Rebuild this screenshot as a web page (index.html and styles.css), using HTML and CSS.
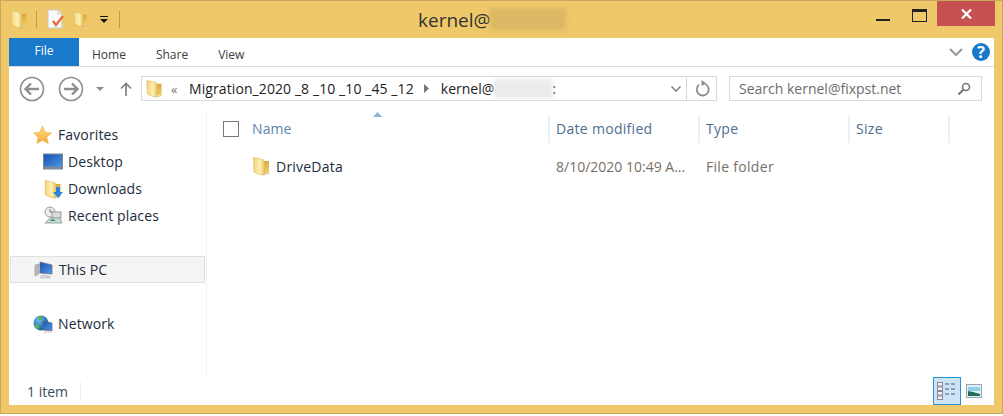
FILE: index.html
```html
<!DOCTYPE html>
<html lang="en">
<head>
<meta charset="utf-8">
<title>kernel@</title>
<link rel="stylesheet" href="styles.css">
</head>
<body>
<svg class="defs" width="0" height="0" aria-hidden="true">
  <defs>
    <linearGradient id="fold" x1="0" y1="0" x2="1" y2="0">
      <stop offset="0" stop-color="#f3d47a"/><stop offset=".6" stop-color="#fdf0b4"/><stop offset="1" stop-color="#e6c25e"/>
    </linearGradient>
    <linearGradient id="fold2" x1="0" y1="0" x2="0" y2="1">
      <stop offset="0" stop-color="#d9a93d"/><stop offset="1" stop-color="#f0cf6c"/>
    </linearGradient>
    <linearGradient id="scr" x1="0" y1="0" x2="1" y2="1">
      <stop offset="0" stop-color="#1a4fb0"/><stop offset="1" stop-color="#4f9ae8"/>
    </linearGradient>
    <linearGradient id="star" x1="0" y1="0" x2="0" y2="1">
      <stop offset="0" stop-color="#ffdf7a"/><stop offset="1" stop-color="#f3a93c"/>
    </linearGradient>
    <radialGradient id="globe" cx=".35" cy=".3" r=".8">
      <stop offset="0" stop-color="#6fc0ea"/><stop offset=".6" stop-color="#2a78b8"/><stop offset="1" stop-color="#1d4f7c"/>
    </radialGradient>
    <symbol id="folder" viewBox="0 0 18 20">
      <path d="M12 5h4.500v12.500H10z" fill="url(#fold2)"/>
      <path d="M1 1.500 10 3.500 12 5v14l-5-.5L1.500 16z" fill="url(#fold)" stroke="#dcb552" stroke-width=".6"/>
      <path d="M11 19l6-1.500" stroke="#bbb" stroke-width="1" opacity=".6"/>
    </symbol>
    <symbol id="pc" viewBox="0 0 20 20">
      <path d="M1 5l4-1v10l-4 2z" fill="#b8b8b8" stroke="#8a8a8a" stroke-width=".5"/>
      <path d="M6 2l12 3v9L6 13z" fill="url(#scr)" stroke="#667" stroke-width=".7"/>
      <path d="M8 15l8 1v2H6z" fill="#d8d8d8" stroke="#aaa" stroke-width=".5"/>
    </symbol>
  </defs>
</svg>
<div class="window">
  <header class="titlebar">
    <div class="qat">
      <svg class="ico-16" viewBox="0 0 18 20"><use href="#folder"/></svg>
      <span class="qat-sep"></span>
      <svg class="qat-doc" viewBox="0 0 18 20">
        <path d="M1 1h10l4 4v14H1z" fill="#fafafa" stroke="#c9c9c9"/>
        <path d="M11 1v4h4" fill="#eee" stroke="#c9c9c9"/>
        <path d="M6 12l3 4 7-9" fill="none" stroke="#e8703d" stroke-width="2.400"/>
      </svg>
      <svg class="qat-folder" viewBox="0 0 18 20"><use href="#folder"/></svg>
      <svg class="qat-menu" viewBox="0 0 8 7"><path d="M0 0h8v1H0z" fill="#111"/><path d="M0 3h8L4 7z" fill="#111"/></svg>
      <span class="qat-sep qat-sep-end"></span>
    </div>
    <div class="title"><span>kernel@</span><span class="blur blur-title"></span></div>
    <div class="controls">
      <button class="ctl" aria-label="Minimize"><span class="min"></span></button>
      <button class="ctl" aria-label="Maximize"><span class="max"></span></button>
      <button class="ctl close" aria-label="Close">
        <svg width="11" height="10" viewBox="0 0 11 10"><path d="M1 .5l9 9M10 .5l-9 9" stroke="#fff" stroke-width="2.200"/></svg>
      </button>
    </div>
  </header>

  <div class="content">
    <nav class="ribbon">
      <span class="tab-file">File</span>
      <span class="tab tab-home">Home</span>
      <span class="tab tab-share">Share</span>
      <span class="tab tab-view">View</span>
      <span class="ribbon-right">
        <svg width="14" height="9" viewBox="0 0 14 9"><path d="M1 1l6 6 6-6" fill="none" stroke="#9a9a9a" stroke-width="2"/></svg>
        <span class="help">?</span>
      </span>
    </nav>

    <div class="toolbar">
      <svg class="nav-btn" viewBox="0 0 26 26"><circle cx="13" cy="13" r="11.500" fill="none" stroke="#8e8e8e" stroke-width="1.600"/><path d="M20 13H7M12 7.500 6.500 13l5.500 5.500" fill="none" stroke="#8e8e8e" stroke-width="2.400"/></svg>
      <svg class="nav-btn nav-fwd" viewBox="0 0 26 26"><circle cx="13" cy="13" r="11.500" fill="none" stroke="#8e8e8e" stroke-width="1.600"/><path d="M6 13h13M14 7.500l5.500 5.500-5.500 5.500" fill="none" stroke="#8e8e8e" stroke-width="2.400"/></svg>
      <svg class="nav-drop" width="8" height="4" viewBox="0 0 8 4"><path d="M0 0h8L4 4z" fill="#8e8e8e"/></svg>
      <svg class="nav-up" width="12" height="14" viewBox="0 0 12 14"><path d="M6 14V1.500M1 6.500l5-5 5 5" fill="none" stroke="#808080" stroke-width="1.700"/></svg>
      <div class="address">
        <svg class="addr-folder" viewBox="0 0 18 20"><use href="#folder"/></svg>
        <span class="chev">«</span>
        <span class="crumb crumb-long">Migration_2020 _8 _10 _10 _45 _12</span>
        <svg class="crumb-arrow" width="5" height="9" viewBox="0 0 5 9"><path d="M0 0l5 4.500L0 9z" fill="#777"/></svg>
        <span class="crumb">kernel@</span><span class="blur blur-addr"></span><span class="crumb crumb-end">:</span>
        <svg class="addr-drop" width="10" height="6" viewBox="0 0 10 6"><path d="M.5.500 5 5 9.500.500" fill="none" stroke="#777" stroke-width="1.400"/></svg>
        <span class="refresh">
          <svg width="16" height="17" viewBox="0 0 16 17"><path d="M10.500 4.200A6 6 0 1 1 4 4.800" fill="none" stroke="#8e8e8e" stroke-width="1.800"/><path d="M6.500 0v6l5-2.500z" fill="#8e8e8e"/></svg>
        </span>
      </div>
      <div class="search">
        <span>Search kernel@fixpst.net</span>
        <svg width="14" height="14" viewBox="0 0 14 14"><circle cx="9" cy="5" r="3.500" fill="none" stroke="#777" stroke-width="1.600"/><path d="M6.500 7.500 1.500 12.500" stroke="#777" stroke-width="2.200"/></svg>
      </div>
    </div>

    <div class="body">
      <aside class="sidebar">
        <div class="side-group">
          <div class="side-row head">
            <svg class="side-ico" viewBox="0 0 20 20"><path d="M9.500 1l2.700 6.200 6.300.7-4.700 4.300 1.500 6.300-5.800-3.200-5.600 3.200 1.300-6.300L.5 7.900 6.800 7.200z" fill="url(#star)" stroke="#e8b04a" stroke-width=".6"/></svg>
            <span>Favorites</span>
          </div>
          <div class="side-row sub">
            <svg class="side-ico" viewBox="0 0 20 18"><rect x=".5" y="1" width="19" height="15" fill="url(#scr)" stroke="#7d8a99"/><rect x=".5" y="13.500" width="19" height="2.500" fill="#7d8a99"/></svg>
            <span>Desktop</span>
          </div>
          <div class="side-row sub">
            <svg class="side-ico" viewBox="0 0 20 20"><use href="#folder"/><path d="M13 8h4v5h3l-5 6-5-6h3z" fill="#2a84d8"/></svg>
            <span>Downloads</span>
          </div>
          <div class="side-row sub">
            <svg class="side-ico" viewBox="0 0 20 20"><circle cx="7" cy="6" r="5" fill="#eee" stroke="#999"/><path d="M7 3v3h3" fill="none" stroke="#777"/><rect x="9" y="6" width="9" height="6" fill="#dcdcdc" stroke="#999"/><path d="M2 17l5-5h10l2 5z" fill="#cfd8dc" stroke="#8a9"/><path d="M6 15l4-2 3 2z" fill="#3a8f6a"/></svg>
            <span>Recent places</span>
          </div>
        </div>
        <div class="side-row head selected">
          <svg class="side-ico" viewBox="0 0 20 20"><use href="#pc"/></svg>
          <span>This PC</span>
        </div>
        <div class="side-row head network">
          <svg class="side-ico" viewBox="0 0 20 20"><circle cx="8" cy="9" r="7.500" fill="url(#globe)"/><path d="M1.500 11c2-2 4-1 5 1l-1 4C3.500 15 2 13 1.500 11zM5 3c2-1 4-1 5 0L8 6 5 5.500z" fill="#58b25a"/><path d="M10 7l9 2v8l-9-1z" fill="url(#scr)" stroke="#667" stroke-width=".7"/><path d="M11 17l7 .8V19h-8z" fill="#ddd"/></svg>
          <span>Network</span>
        </div>
      </aside>

      <main class="list">
        <div class="list-head">
          <span class="check"></span>
          <div class="col col-name">Name<svg class="sort" width="9" height="5" viewBox="0 0 9 5"><path d="M0 5l4.500-5L9 5z" fill="#8ab4d2"/></svg></div>
          <div class="col col-date">Date modified</div>
          <div class="col col-type">Type</div>
          <div class="col col-size">Size</div>
        </div>
        <div class="list-row">
          <div class="cell-name">
            <svg class="row-ico" viewBox="0 0 18 20"><use href="#folder"/></svg>
            <span>DriveData</span>
          </div>
          <div class="cell cell-date">8/10/2020 10:49 A...</div>
          <div class="cell cell-type">File folder</div>
        </div>
      </main>
    </div>

    <footer class="status">
      <span class="count">1 item</span>
      <span class="views">
        <span class="view-btn active">
          <svg width="20" height="20" viewBox="0 0 20 20">
            <g fill="#f4f4f4" stroke="#889"><rect x=".5" y="1.500" width="5" height="3.500"/><rect x=".5" y="6" width="5" height="3.500"/><rect x=".5" y="10.500" width="5" height="3.500"/><rect x=".5" y="15" width="5" height="3.500"/></g>
            <path d="M8 3h4M14 3h4M8 8h4M14 8h4M8 13h4M14 13h4" stroke="#4a5a68" stroke-width="1.200"/>
          </svg>
        </span>
        <span class="view-btn">
          <svg width="16" height="14" viewBox="0 0 16 14"><rect x=".5" y=".5" width="15" height="13" fill="#dff0f4" stroke="#9aa7b2"/><path d="M2 3h12v4H2z" fill="#8ed2e4"/><path d="M2 7l5 1 7 2v2H2z" fill="#1f6d55"/></svg>
        </span>
      </span>
    </footer>
  </div>
</div>
</body>
</html>
```

FILE: styles.css
```css
* { box-sizing: border-box; }
html, body { margin: 0; padding: 0; background: #fff; }
body { width: 1003px; height: 416px; overflow: hidden; font-family: "Open Sans", "Noto Sans", "Liberation Sans", sans-serif; font-size: 14px; color: #1a1a1a; }
.defs { display: block; height: 0; }

.window { height: 414px; background: #efc869; border: 1px solid #c8a85a; padding: 0 8px 8px; display: flex; flex-direction: column; }

.titlebar { height: 37px; flex: none; display: flex; align-items: flex-start; }
.qat { width: 376px; padding-top: 8px; display: flex; align-items: center; height: 28px; }
.ico-16 { width: 18px; height: 20px; flex: none; margin-left: 1px; }
.qat-sep { width: 1px; height: 17px; background: #b99a4e; margin-left: 8px; flex: none; }
.qat-doc { width: 18px; height: 20px; margin-left: 10px; flex: none; }
.qat-folder { width: 15px; height: 20px; margin-left: 8px; flex: none; }
.qat-menu { width: 8px; height: 7px; margin-left: 12px; flex: none; }
.qat-sep-end { margin-left: 11px; }

.title { width: 292px; padding-top: 8px; padding-left: 33px; font-size: 19px; line-height: 22px; color: #333; display: flex; }
.blur { display: inline-block; filter: blur(2px); }
.blur-title { width: 76px; height: 22px; background: #dbb863; margin-top: -1px; margin-left: -1px; }

.controls { flex: 1; display: flex; justify-content: flex-end; align-items: flex-start; margin-right: -1px; }
.ctl { border: 0; padding: 0; background: none; height: 25px; display: flex; align-items: center; justify-content: center; }
.ctl:nth-child(1) { width: 32px; margin-right: 4px; }
.ctl:nth-child(2) { width: 33px; }
.min { width: 14px; height: 2px; background: #222; margin-top: 12px; }
.max { width: 15px; height: 13px; border: 1px solid #222; border-top-width: 3px; margin-top: 3px; }
.close { width: 58px; margin-left: 1px; background: #c75050; }

.content { flex: 1; background: #fff; display: flex; flex-direction: column; min-height: 0; }

.ribbon { height: 29px; flex: none; border-bottom: 1px solid #dadbdc; display: flex; font-size: 12px; color: #3c3c3c; }
.tab-file { width: 70px; height: 28px; background: #1979ca; color: #fff; text-align: center; line-height: 25px; }
.tab { line-height: 33px; }
.tab-home { margin-left: 13px; }
.tab-share { margin-left: 30px; }
.tab-view { margin-left: 30px; }
.ribbon-right { margin-left: auto; display: flex; align-items: center; gap: 9px; padding-right: 4px; }
.help { width: 18px; height: 18px; border-radius: 50%; background: #1979ca; color: #fff; font-size: 16px; font-weight: 700; text-align: center; line-height: 18px; }

.toolbar { height: 45px; flex: none; display: flex; align-items: center; padding-left: 10px; padding-bottom: 2px; }
.nav-btn { width: 26px; height: 26px; flex: none; }
.nav-fwd { margin-left: 13px; }
.nav-drop { margin-left: 12px; flex: none; }
.nav-up { margin-left: 16px; flex: none; }
.address { width: 576px; height: 25px; margin-left: 9px; border: 1px solid #d9d9d9; display: flex; align-items: center; padding-left: 4px; flex: none; color: #222; }
.addr-folder { width: 17px; height: 19px; flex: none; }
.chev { margin-left: 8px; width: 18px; color: #777; font-size: 13px; }
.crumb { white-space: pre; }
.crumb-long { letter-spacing: 0.090px; }
.crumb-arrow { margin: 0 12px 0 10px; flex: none; }
.crumb-end { margin-left: -1px; }
.blur-addr { width: 59px; height: 20px; background: #ececec; }
.addr-drop { margin-left: auto; margin-right: 5px; flex: none; }
.refresh { width: 30px; height: 23px; border-left: 1px solid #d9d9d9; display: flex; align-items: center; justify-content: center; padding-left: 2px; flex: none; }
.search { width: 253px; height: 25px; margin-left: 12px; border: 1px solid #d9d9d9; display: flex; align-items: center; justify-content: space-between; padding: 0 10px 0 9px; color: #6d6d6d; flex: none; }

.body { flex: 1; display: flex; min-height: 0; }
.sidebar { width: 198px; flex: none; border-right: 1px solid #f0f0f0; padding-top: 9px; color: #1c2c3c; letter-spacing: 0.120px; }
.side-row { height: 27px; display: flex; align-items: center; }
.side-ico { width: 20px; height: 20px; flex: none; margin-right: 5px; }
.head { padding-left: 25px; }
.head .side-ico { width: 20px; margin-right: 5px; margin-left: -1px; }
.sub { padding-left: 34px; }
.selected { margin-top: 27px; margin-left: 1px; width: 195px; height: 27px; padding-left: 24px; background: #f4f4f4; border: 1px solid #e0e0e0; }
.network { margin-top: 27px; }

.list { flex: 1; }
.list-head { height: 34px; display: flex; align-items: center; }
.check { width: 16px; height: 16px; border: 1px solid #777; margin-left: 16px; flex: none; }
.col { height: 28px; line-height: 28px; padding-left: 6px; border-right: 2px solid #e9f1f9; color: #4d6d92; flex: none; letter-spacing: 0.300px; }
.col-name { width: 305px; margin-left: 6px; padding-left: 7px; position: relative; color: #5b85b0; letter-spacing: 0.100px; }
.col-date, .col-type { width: 150px; }
.col-size { width: 100px; }
.sort { position: absolute; left: 128px; top: -3px; }

.list-row { height: 40px; display: flex; align-items: center; }
.cell-name { width: 349px; padding-left: 45px; display: flex; align-items: center; flex: none; color: #1c2c3c; letter-spacing: 0.220px; }
.row-ico { width: 19px; height: 20px; margin-right: 5px; flex: none; }
.cell { width: 150px; color: #7a6f66; flex: none; white-space: nowrap; }
.cell-type { letter-spacing: 0.300px; }

.status { height: 28px; flex: none; display: flex; align-items: center; justify-content: space-between; padding-left: 18px; color: #3c4c5c; }
.count { width: 54px; border-right: 1px solid #eee; }
.views { display: flex; align-items: flex-end; height: 28px; padding-right: 8px; }
.view-btn { height: 28px; width: 32px; display: flex; align-items: center; justify-content: center; }
.view-btn.active { width: 28px; background: #cce4f5; border: 1px solid #2a93d5; }
.view-btn:last-child { width: 25px; }
```
